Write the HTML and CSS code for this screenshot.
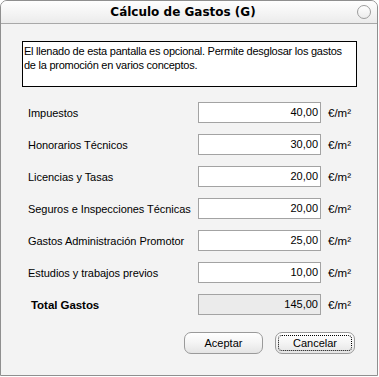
FILE: index.html
```html
<!DOCTYPE html>
<html lang="es">
<head>
<meta charset="utf-8">
<title>Cálculo de Gastos (G)</title>
<link rel="stylesheet" href="styles.css">
</head>
<body>
<div class="window">
  <div class="titlebar">
    <div class="title">Cálculo de Gastos (G)</div>
    <div class="close"></div>
  </div>
  <div class="content">
    <div class="desc">El llenado de esta pantalla es opcional. Permite desglosar los gastos de la promoción en varios conceptos.</div>
    <div class="rows">
      <div class="row"><span class="label">Impuestos</span><span class="field">40,00</span><span class="unit">€/m²</span></div>
      <div class="row"><span class="label">Honorarios Técnicos</span><span class="field">30,00</span><span class="unit">€/m²</span></div>
      <div class="row"><span class="label">Licencias y Tasas</span><span class="field">20,00</span><span class="unit">€/m²</span></div>
      <div class="row"><span class="label">Seguros e Inspecciones Técnicas</span><span class="field">20,00</span><span class="unit">€/m²</span></div>
      <div class="row"><span class="label">Gastos Administración Promotor</span><span class="field">25,00</span><span class="unit">€/m²</span></div>
      <div class="row"><span class="label">Estudios y trabajos previos</span><span class="field">10,00</span><span class="unit">€/m²</span></div>
      <div class="row"><span class="label total">Total Gastos</span><span class="field readonly">145,00</span><span class="unit">€/m²</span></div>
    </div>
    <div class="buttons">
      <button class="btn">Aceptar</button>
      <button class="btn focused">Cancelar</button>
    </div>
  </div>
</div>
</body>
</html>
```
FILE: styles.css
```css
html, body {
  margin: 0;
  padding: 0;
  background: #ffffff;
}
body {
  font-family: "Liberation Sans", Arial, sans-serif;
  font-size: 11px;
  color: #000;
}
.window {
  width: 378px;
  height: 376px;
  box-sizing: border-box;
  border: 1px solid #8f8f8f;
  border-radius: 7px 7px 0 0;
  background: #f3f3f3;
  overflow: hidden;
  display: flex;
  flex-direction: column;
}
.titlebar {
  height: 22px;
  flex: none;
  border-bottom: 1px solid #a8a8a8;
  background: linear-gradient(#fefefe, #f3f3f3 60%, #ebebeb);
  display: flex;
  align-items: center;
}
.title {
  flex: 1;
  text-align: center;
  padding-left: 8px;
  font-family: "DejaVu Sans", Verdana, sans-serif;
  font-weight: bold;
  font-size: 12px;
  color: #000;
}
.close {
  width: 12px;
  height: 12px;
  border: 1px solid #9c9c9c;
  border-radius: 50%;
  background: linear-gradient(#ffffff, #ececec);
  margin-right: 6px;
  margin-top: -1px;
}
.content {
  padding: 17px 21px 0 21px;
  display: flex;
  flex-direction: column;
}
.desc {
  width: 335px;
  height: 46px;
  box-sizing: border-box;
  border: 1px solid #000;
  background: #fff;
  padding: 2px 1px;
  line-height: 14px;
  letter-spacing: -0.25px;
}
.rows {
  margin-top: 15px;
  display: flex;
  flex-direction: column;
  gap: 11px;
}
.row {
  display: grid;
  grid-template-columns: 170px 123px auto;
  align-items: center;
  height: 21px;
  padding-left: 6px;
}
.label {
  white-space: nowrap;
  letter-spacing: -0.05px;
}
.label.total {
  font-weight: bold;
  font-size: 11.5px;
  padding-left: 3px;
}
.field {
  height: 21px;
  box-sizing: border-box;
  border: 1px solid #a3a3a3;
  background: #fff;
  text-align: right;
  padding-right: 2px;
  line-height: 19px;
}
.field.readonly {
  background: #ebebeb;
}
.unit {
  padding-left: 7px;
  font-size: 11.5px;
}
.buttons {
  margin-top: 17px;
  display: flex;
  justify-content: flex-end;
  gap: 12px;
  padding-right: 1px;
}
.btn {
  font-family: "Liberation Sans", Arial, sans-serif;
  font-size: 11px;
  color: #000;
  height: 22px;
  width: 79px;
  border: 1px solid #9a9a9a;
  border-radius: 7px;
  background: linear-gradient(#ffffff, #f4f4f4 50%, #e4e4e4);
  padding: 0;
}
.btn.focused {
  width: 80px;
  outline: 1px dotted #000;
  outline-offset: -4px;
}
```
